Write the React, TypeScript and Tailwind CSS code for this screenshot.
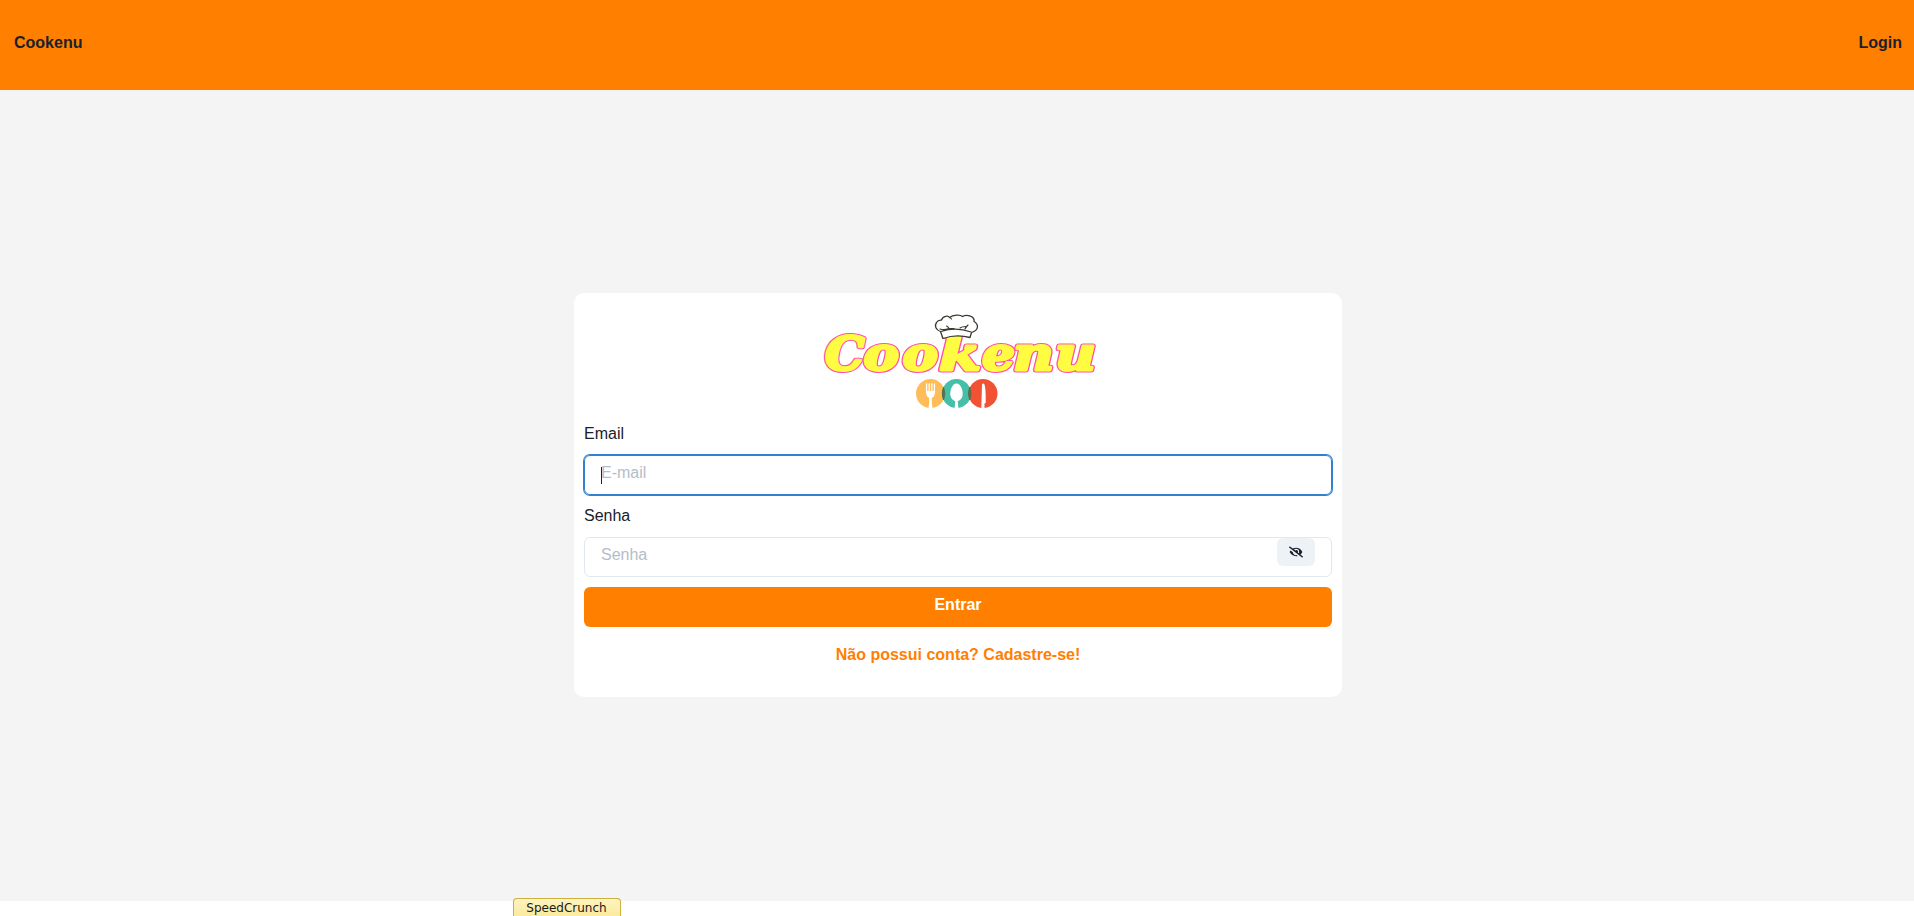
import { FaEyeSlash } from "react-icons/fa";

const letters = [
  { ch: "C", x: 825, w: 39.5, size: 46 },
  { ch: "o", x: 863.5, w: 35.5, size: 47 },
  { ch: "o", x: 902.5, w: 35.5, size: 47 },
  { ch: "k", x: 939, w: 42, size: 47 },
  { ch: "e", x: 982, w: 33, size: 47 },
  { ch: "n", x: 1013, w: 41, size: 47 },
  { ch: "u", x: 1055, w: 41, size: 47 },
];

function LogoText({ className }: { className: string }) {
  return (
    <g className={className} fontFamily="'DejaVu Serif', serif" fontWeight="700" fontStyle="italic" strokeLinejoin="round">
      {letters.map((l, i) => (
        <text key={i} x={l.x} y={369.8} fontSize={l.size} textLength={l.w} lengthAdjust="spacingAndGlyphs">
          {l.ch}
        </text>
      ))}
    </g>
  );
}

function Logo() {
  return (
    <svg width="300" height="110" viewBox="808 303 300 110" className="block shrink-0" role="img">
      <LogoText className="fill-[#ff4fa8] stroke-[#ff4fa8] stroke-[5]" />
      <LogoText className="fill-[#fffc41] stroke-[#fffc41] stroke-[2.8]" />
      <path
        d="M943 338.5L940.5 331.5C936 330 934 326 936.5 322.500C938.500 319.500 941 320.500 941.500 320C943 315.500 948.500 315.500 949.500 317.500C953 314.500 960.500 314.500 962.500 316.500C967 314 975 316.500 974 321.500C978.500 324 979.500 330 971.500 332.500L970 337.500Q956 334 943 338.500Z"
        fill="white"
        stroke="#3d3931"
        strokeWidth="1.3"
        strokeLinejoin="round"
      />
      <path
        d="M941 331.500Q956 326.500 971 332M940 329Q944 330.500 949 328.500M949 328.500Q948.500 327 946.500 326M950 328.500L954 328.500M960 328Q962 326.500 966 326.500M965 329Q966 327 968 325M949.500 317.500Q951 318 951.500 319"
        fill="none"
        stroke="#3d3931"
        strokeWidth="1.1"
        strokeLinecap="round"
      />
      <circle cx="930.500" cy="393.500" r="14.500" fill="#ffbd59" />
      <circle cx="956.500" cy="393.500" r="14.500" fill="#46bfa8" />
      <circle cx="983" cy="393.500" r="14.500" fill="#f15234" />
      <path d="M943.500 387Q946 393.500 943.500 400Q941 393.500 943.500 387ZM969.700 387Q972.200 393.500 969.700 400Q967.200 393.500 969.700 387Z" fill="#57714a" stroke="#57714a" />
      <path d="M926.600 384V392M929.200 384V392M931.800 384V392M934.400 384V392" fill="none" stroke="white" strokeWidth="1.3" strokeLinecap="round" />
      <path d="M926 391H935Q935 396.500 931.800 398V402L932.500 408.500H928.500L929.200 402V398Q926 396.500 926 391Z" fill="white" />
      <path d="M956.500 383.500C961 383.500 963.500 391 962.500 396C961.800 399 959.500 400.500 957.700 401.300L958.500 408.500H954.500L955.300 401.300C953.500 400.500 951.200 399 950.500 396C949.500 391 952 383.500 956.500 383.500Z" fill="white" />
      <path d="M982 384.500Q983 382.500 984.500 384.500Q986 389 985.700 403L984.500 403.500V408.500H981.300Z" fill="white" />
    </svg>
  );
}

export default function App() {
  return (
    <div className="flex h-[916px] w-full flex-col overflow-hidden bg-white font-['Liberation_Sans',Arial,sans-serif] text-base leading-6 text-[#1a202c]">
      <header className="flex h-[90px] shrink-0 items-start justify-between bg-[#ff8000] pt-[31px] pr-3 pl-3.5 font-bold">
        <a>Cookenu</a>
        <a>Login</a>
      </header>
      <main className="flex h-[811px] shrink-0 items-center justify-center bg-[#f4f4f4] pb-[1px] pl-[2px]">
        <form className="flex h-[404px] w-[768px] flex-col items-stretch gap-2.5 rounded-[10px] bg-white p-2.5">
          <div className="flex h-[110px] justify-center">
            <Logo />
          </div>
          <div className="flex flex-col gap-2">
            <label className="-mt-px mb-px">Email</label>
            <div className="flex h-10 items-center rounded-md border border-[#3182ce] px-4 pb-1 shadow-[0_0_0_1px_#3182ce]">
              <span className="mt-1 h-[17px] w-px bg-[#1a202c]" />
              <span className="-ml-px text-[#b4bdca]">E-mail</span>
            </div>
          </div>
          <div className="flex flex-col gap-2">
            <label className="-mt-px mb-px">Senha</label>
            <div className="flex h-10 items-start justify-between rounded-md border border-[#e2e8f0] pr-4 pl-4">
              <span className="pt-[5px] text-[#b4bdca]">Senha</span>
              <button type="button" className="flex h-7 w-[38px] items-center justify-center rounded-md bg-[#edf2f7]">
                <FaEyeSlash size={14} />
              </button>
            </div>
          </div>
          <button type="button" className="h-10 rounded-md bg-[#ff8000] pb-1 font-bold text-white">
            Entrar
          </button>
          <button type="button" className="h-10 pb-1 font-bold text-[#ff8000]">
            Não possui conta? Cadastre-se!
          </button>
        </form>
      </main>
      <div className="absolute top-[898px] left-[513px] flex h-[18px] w-[108px] justify-center rounded-t-[4px] border border-b-0 border-[#cdb03d] bg-linear-to-b from-[#fff3bf] to-[#faeb9f] pr-px font-['DejaVu_Sans',sans-serif] text-[12px] leading-[19px] text-[#1a1a1a]">
        SpeedCrunch
      </div>
    </div>
  );
}
